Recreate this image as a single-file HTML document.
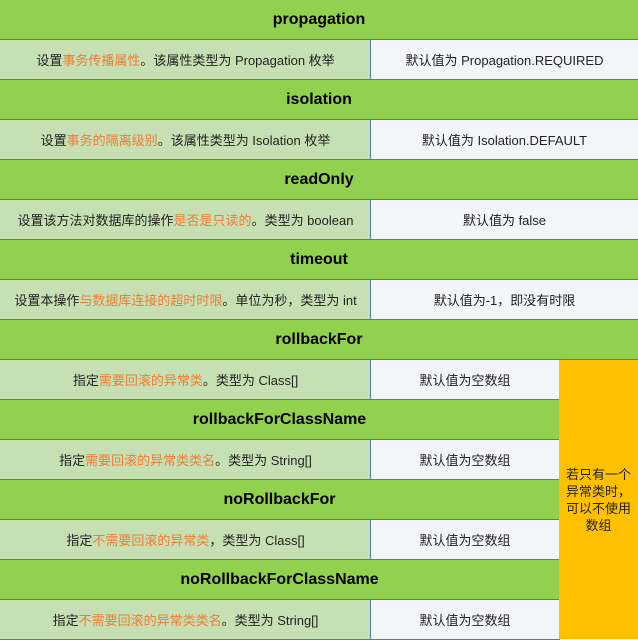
<!DOCTYPE html><html><head><meta charset="utf-8"><style>
body{margin:0;width:638px;height:639px;overflow:hidden;background:#fff;font-family:"Liberation Sans","Noto Sans CJK SC",sans-serif;}
div{position:absolute;box-sizing:border-box;display:flex;align-items:center;justify-content:center;}
.h{background:#92d050;font-weight:bold;font-size:16px;color:#000;height:40px;}
.l{background:#c6e0b4;font-size:13px;color:#222;height:41px;border:1px solid #4a7ebb;border-right:none;border-left:none;}
.r{background:#f4f5f9;font-size:13px;color:#222;height:41px;border:1px solid #4a7ebb;}
.o{color:#f07c36;}
</style></head><body>
<div class="h" style="left:0;top:0;width:638px">propagation</div>
<div class="l" style="left:0;top:39px;width:371px">设置<span class="o">事务传播属性</span>。该属性类型为 Propagation 枚举</div>
<div class="r" style="left:370px;top:39px;width:268px;border-right:none">默认值为 Propagation.REQUIRED</div>
<div class="h" style="left:0;top:80px;width:638px">isolation</div>
<div class="l" style="left:0;top:119px;width:371px">设置<span class="o">事务的隔离级别</span>。该属性类型为 Isolation 枚举</div>
<div class="r" style="left:370px;top:119px;width:268px;border-right:none">默认值为 Isolation.DEFAULT</div>
<div class="h" style="left:0;top:160px;width:638px">readOnly</div>
<div class="l" style="left:0;top:199px;width:371px">设置该方法对数据库的操作<span class="o">是否是只读的</span>。类型为 boolean</div>
<div class="r" style="left:370px;top:199px;width:268px;border-right:none">默认值为 false</div>
<div class="h" style="left:0;top:240px;width:638px">timeout</div>
<div class="l" style="left:0;top:279px;width:371px">设置本操作<span class="o">与数据库连接的超时时限</span>。单位为秒，类型为 int</div>
<div class="r" style="left:370px;top:279px;width:268px;border-right:none">默认值为-1，即没有时限</div>
<div class="h" style="left:0;top:320px;width:638px">rollbackFor</div>
<div class="l" style="left:0;top:359px;width:371px">指定<span class="o">需要回滚的异常类</span>。类型为 Class[]</div>
<div class="r" style="left:370px;top:359px;width:190px">默认值为空数组</div>
<div class="h" style="left:0;top:400px;width:559px">rollbackForClassName</div>
<div class="l" style="left:0;top:439px;width:371px">指定<span class="o">需要回滚的异常类类名</span>。类型为 String[]</div>
<div class="r" style="left:370px;top:439px;width:190px">默认值为空数组</div>
<div class="h" style="left:0;top:480px;width:559px">noRollbackFor</div>
<div class="l" style="left:0;top:519px;width:371px">指定<span class="o">不需要回滚的异常类</span>，类型为 Class[]</div>
<div class="r" style="left:370px;top:519px;width:190px">默认值为空数组</div>
<div class="h" style="left:0;top:560px;width:559px">noRollbackForClassName</div>
<div class="l" style="left:0;top:599px;width:371px">指定<span class="o">不需要回滚的异常类类名</span>。类型为 String[]</div>
<div class="r" style="left:370px;top:599px;width:190px">默认值为空数组</div>
<div style="left:559px;top:359px;width:79px;height:280px;background:#ffc000;border-top:1px solid #4a7ebb;font-size:13px;color:#222;text-align:center;line-height:17px;">若只有一个<br>异常类时，<br>可以不使用<br>数组</div>
</body></html>
